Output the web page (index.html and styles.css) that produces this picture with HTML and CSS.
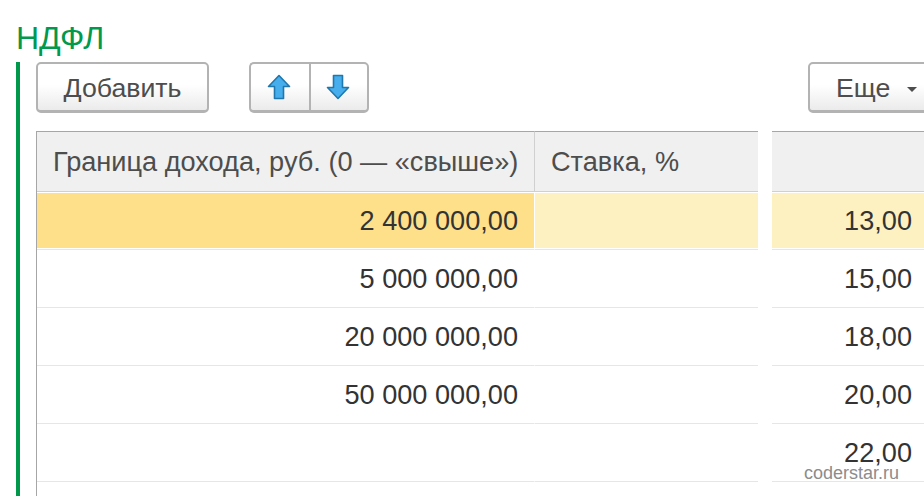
FILE: index.html
```html
<!DOCTYPE html>
<html lang="ru">
<head>
    <meta charset="UTF-8">
    <title>НДФЛ</title>
    <link rel="stylesheet" href="styles.css">
</head>
<body>
    <h1 class="title">НДФЛ</h1>
    <div class="group">
        <div class="toolbar">
            <button class="btn btn-add">Добавить</button>
            <div class="btn-pair">
                <button class="btn btn-icon">
                    <svg width="24" height="26" viewBox="0 0 24 26"><path d="M12 1.5 L22.5 12.5 L16.5 12.5 L16.5 24.5 L7.5 24.5 L7.5 12.5 L1.5 12.5 Z" fill="#47aeee" stroke="#1f77ad" stroke-width="1.6" stroke-linejoin="round"/></svg>
                </button>
                <button class="btn btn-icon">
                    <svg width="24" height="26" viewBox="0 0 24 26"><path d="M12 24.5 L22.5 13.5 L16.5 13.5 L16.5 1.5 L7.5 1.5 L7.5 13.5 L1.5 13.5 Z" fill="#47aeee" stroke="#1f77ad" stroke-width="1.6" stroke-linejoin="round"/></svg>
                </button>
            </div>
            <button class="btn btn-more">Еще <span class="caret"></span></button>
        </div>
        <div class="grid">
            <div class="row head">
                <div class="cell first">Граница дохода, руб. (0 — «свыше»)</div>
                <div class="cell">Ставка, %</div>
                <div class="gap"></div>
                <div class="cell last"></div>
            </div>
            <div class="row current">
                <div class="cell first num selected">2 400 000,00</div>
                <div class="cell"></div>
                <div class="gap"></div>
                <div class="cell last num">13,00</div>
            </div>
            <div class="row">
                <div class="cell first num">5 000 000,00</div>
                <div class="cell"></div>
                <div class="gap"></div>
                <div class="cell last num">15,00</div>
            </div>
            <div class="row">
                <div class="cell first num">20 000 000,00</div>
                <div class="cell"></div>
                <div class="gap"></div>
                <div class="cell last num">18,00</div>
            </div>
            <div class="row">
                <div class="cell first num">50 000 000,00</div>
                <div class="cell"></div>
                <div class="gap"></div>
                <div class="cell last num">20,00</div>
            </div>
            <div class="row">
                <div class="cell first num"></div>
                <div class="cell"></div>
                <div class="gap"></div>
                <div class="cell last num">22,00</div>
            </div>
            <div class="row">
                <div class="cell first"></div>
                <div class="cell"></div>
                <div class="gap"></div>
                <div class="cell last"></div>
            </div>
        </div>
    </div>
    <div class="watermark">coderstar.ru</div>
</body>
</html>
```

FILE: styles.css
```css
html, body {
    height: 496px;
    overflow: hidden;
}
body {
    font-family: "Liberation Sans", Arial, sans-serif;
    background-color: #ffffff;
    margin: 0;
    padding: 0;
    position: relative;
}
.title {
    margin: 0;
    padding: 21px 0 0 16px;
    height: 62px;
    box-sizing: border-box;
    font-size: 32px;
    line-height: 34px;
    font-weight: normal;
    color: #00994d;
}
.group {
    margin-left: 16px;
    border-left: 4px solid #00984a;
    padding-left: 16px;
    height: 434px;
    overflow: hidden;
}
.toolbar {
    display: flex;
    height: 69px;
    align-items: flex-start;
}
.btn {
    height: 51px;
    flex-shrink: 0;
    box-sizing: border-box;
    border: 2px solid #b3b3b3;
    border-bottom-width: 3px;
    border-radius: 5px;
    background: linear-gradient(#ffffff 45%, #ebebeb);
    font-family: inherit;
    font-size: 26.7px;
    color: #4d4d4d;
    padding: 2px 0 0;
}
.btn-add {
    width: 173px;
}
.btn-pair {
    display: flex;
    flex-shrink: 0;
    margin-left: 40px;
}
.btn-icon {
    width: 60px;
    display: flex;
    align-items: center;
    justify-content: center;
    padding: 0 3px 0 0;
}
.btn-icon:first-child {
    border-right: none;
    border-radius: 5px 0 0 5px;
}
.btn-icon:last-child {
    border-left: 2px solid #b3b3b3;
    border-radius: 0 5px 5px 0;
}
.btn-more {
    width: 140px;
    margin-left: 439px;
    text-align: left;
    padding-left: 26px;
}
.caret {
    display: inline-block;
    width: 0;
    height: 0;
    margin-left: 9px;
    vertical-align: middle;
    border-left: 5px solid transparent;
    border-right: 5px solid transparent;
    border-top: 5px solid #4d4d4d;
}
.grid {
    border-left: 1px solid #a6a6a6;
    font-size: 27.15px;
    color: #333333;
}
.row {
    display: grid;
    grid-template-columns: 498px 223px 14px 152px;
    height: 58px;
}
.cell {
    border-bottom: 1px solid #e6e6e6;
    box-sizing: border-box;
    padding: 0 16px 0 16px;
    display: flex;
    align-items: center;
    white-space: nowrap;
}
.first {
    border-right: 1px solid transparent;
}
.last {
    padding-right: 12px;
}
.num {
    justify-content: flex-end;
}
.head {
    height: 61px;
    color: #4d4d4d;
}
.head .cell {
    background-color: #f0f0f0;
    border-top: 1px solid #a6a6a6;
    border-bottom: 1px solid #d0d0d0;
}
.head .first {
    border-right-color: #d0d0d0;
}
.current .cell {
    background-color: #fdf1c2;
    border-top: 1px solid #ffffff;
    box-shadow: inset 0 -1px #ffffff;
}
.current .selected {
    background-color: #fee08b;
    border-right-color: #ffffff;
}
.watermark {
    position: absolute;
    left: 804px;
    top: 463px;
    font-size: 18px;
    color: #8c8c8c;
}
```
